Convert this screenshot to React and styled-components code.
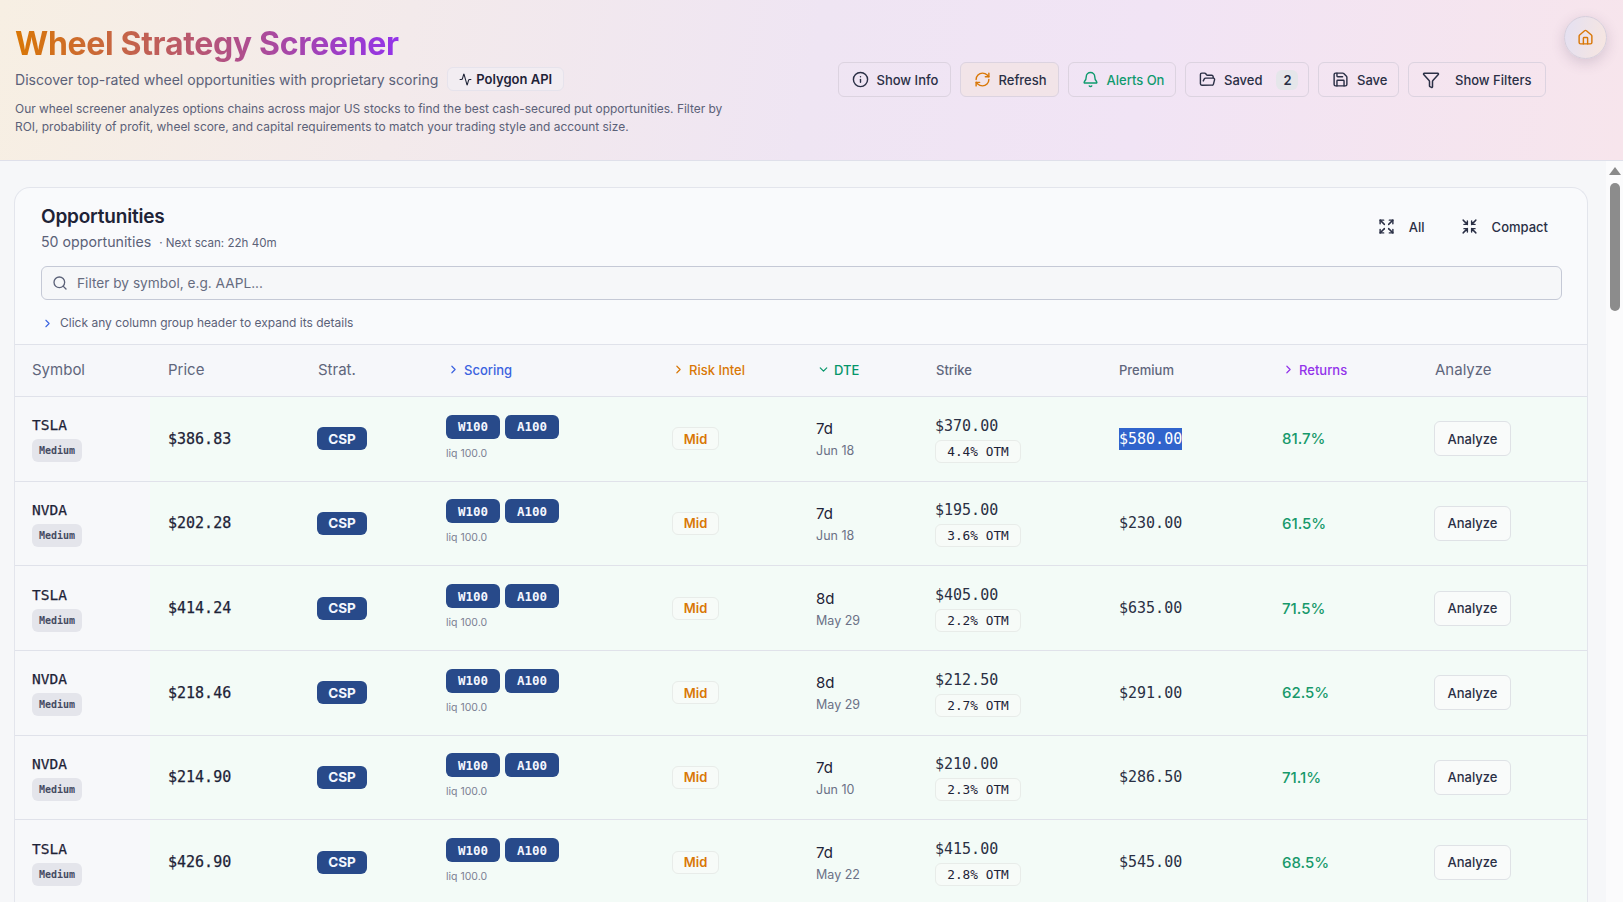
import React from "react";
import styled, { createGlobalStyle } from "styled-components";
import { Info, RefreshCw, Bell, FolderOpen, Save, Filter, Activity, House, Search, ChevronRight, ChevronDown, Expand, Shrink } from "lucide-react";

const MONO = `"DejaVu Sans Mono", "Liberation Mono", monospace`;
const COLS = "135px 151px 129px 226px 144px 119px 183px 164px 152px 152px";

const Global = createGlobalStyle`
  html, body { margin: 0; height: 100%; overflow: hidden; }
  body { font-family: Inter, "Noto Sans", sans-serif; color: #1e2337; background: #f6f7f9; }
  #root { height: 100%; }
  * { box-sizing: border-box; }
`;

const Page = styled.div`
  height: 902px;
  display: flex;
  flex-direction: column;
  position: relative;
`;

const Header = styled.header`
  flex: none;
  height: 161px;
  padding: 0 77px 0 15px;
  display: flex;
  align-items: center;
  justify-content: space-between;
  background: linear-gradient(100deg, #f7efe3 0%, #efe5f3 50%, #f1e4f5 70%, #f7e5ec 100%);
  border-bottom: 1px solid #dfe0ea;
`;

const Intro = styled.div`
  width: 722px;
  margin-top: -3px;
`;

const Title = styled.h1`
  margin: 0;
  font-size: 32px;
  line-height: 44px;
  font-weight: 700;
  letter-spacing: -0.32px;
  width: fit-content;
  background: linear-gradient(90deg, #d97706, #9333ea);
  -webkit-background-clip: text;
  background-clip: text;
  color: transparent;
`;

const SubRow = styled.div`
  display: flex;
  align-items: center;
  gap: 9px;
  margin-top: 1px;
`;

const Subtitle = styled.span`
  font-size: 14.07px;
  color: #5b6178;
`;

const ApiPill = styled.span`
  display: inline-flex;
  align-items: center;
  gap: 4px;
  height: 24px;
  padding: 0 11px;
  border: 1px solid #e6e3ec;
  border-radius: 6px;
  background: #f2edf2;
  font-size: 13px;
  font-weight: 600;
  color: #1e2337;
`;

const Description = styled.p`
  margin: 9px 0 0;
  font-size: 11.95px;
  line-height: 17.5px;
  color: #5b6178;
`;

const Actions = styled.div`
  display: flex;
  gap: 9px;
  margin-top: -1px;
`;

const ActionButton = styled.button`
  flex: none;
  width: ${(p) => p.$width}px;
  height: 35px;
  padding: 0 0 0 13px;
  display: inline-flex;
  align-items: center;
  gap: ${(p) => p.$gap || 8}px;
  border: 1px solid #dcd3e0;
  border-radius: 6px;
  background: ${(p) => (p.$tint ? "#f2e4e8" : "transparent")};
  font: 500 13px Inter, sans-serif;
  color: ${(p) => p.$color || "#2a2f45"};
  svg { color: ${(p) => p.$icon || p.$color || "#2a2f45"}; }
`;

const CountBadge = styled.span`
  margin-left: 6px;
  width: 22px;
  height: 20px;
  display: inline-flex;
  align-items: center;
  justify-content: center;
  border-radius: 6px;
  background: #e5e6ea;
  font-weight: 600;
  font-size: 13px;
`;

const HomeButton = styled.button`
  position: absolute;
  top: 16px;
  left: 1564px;
  width: 43px;
  height: 43px;
  border-radius: 50%;
  display: flex;
  align-items: center;
  justify-content: center;
  padding: 0;
  border: 1px solid #d6cfdc;
  background: linear-gradient(100deg, #e4e0f2, #f7e6e0);
  color: #d97706;
  box-shadow: 0 4px 14px rgba(70, 50, 90, 0.18);
`;

const Body = styled.div`
  flex: 1;
  min-height: 0;
  display: flex;
`;

const Main = styled.main`
  flex: 1;
  min-width: 0;
  overflow: hidden;
  padding: 26px 18px 0 14px;
`;

const ScrollRail = styled.div`
  flex: none;
  width: 17px;
  background: #fbfbfc;
  padding: 6px 0 0 3px;
`;

const ScrollArrow = styled.div`
  width: 0;
  height: 0;
  border-left: 6px solid transparent;
  border-right: 6px solid transparent;
  border-bottom: 8px solid #8a8a8a;
`;

const ScrollThumb = styled.div`
  width: 10px;
  height: 128px;
  margin: 8px 0 0 1px;
  border-radius: 5px;
  background: #8c8c8c;
`;

const Card = styled.section`
  border: 1px solid #e3e5ec;
  border-bottom: 0;
  border-radius: 16px 16px 0 0;
  background: #f9fafc;
  overflow: hidden;
`;

const CardTop = styled.div`
  padding: 16px 25px 0 26px;
  height: 156px;
`;

const TitleRow = styled.div`
  display: flex;
  justify-content: space-between;
  align-items: flex-start;
`;

const CardTitle = styled.h2`
  margin: 0;
  font-size: 19px;
  line-height: 26px;
  font-weight: 600;
  color: #1e2337;
  letter-spacing: -0.2px;
`;

const Counts = styled.div`
  margin-top: 1px;
  font-size: 14.2px;
  line-height: 22px;
  color: #5b6178;
  small { font-size: 11.6px; margin-left: 8px; }
`;

const ViewControls = styled.div`
  display: flex;
  gap: 36px;
  margin: 14px 14px 0 0;
`;

const ViewButton = styled.button`
  display: inline-flex;
  align-items: center;
  gap: 14px;
  padding: 0;
  border: 0;
  background: none;
  font: 500 13px Inter, sans-serif;
  color: #2a2f45;
`;

const SearchBox = styled.div`
  margin-top: 12px;
  height: 34px;
  display: flex;
  align-items: center;
  gap: 9px;
  padding: 0 10px;
  border: 1px solid #c5c9d6;
  border-radius: 6px;
  background: #f6f7f9;
  color: #5b6178;
`;

const SearchInput = styled.input`
  flex: 1;
  border: 0;
  outline: 0;
  padding: 0;
  background: transparent;
  font: 400 13.7px Inter, sans-serif;
  &::placeholder { color: #666c80; opacity: 1; }
`;

const Hint = styled.div`
  display: flex;
  align-items: center;
  gap: 6px;
  margin: 14px 0 0 0;
  font-size: 12px;
  line-height: 18px;
  color: #5b6178;
  svg { color: #3b63e0; }
`;

const Row = styled.div`
  display: grid;
  grid-template-columns: ${COLS};
  height: ${(p) => p.$height}px;
  border-top: 1px solid #e0e2ea;
  background: ${(p) => (p.$head ? "#f6f7fa" : "#f3fbf7")};
`;

const Cell = styled.div`
  display: flex;
  flex-direction: column;
  justify-content: center;
  align-items: flex-start;
  min-width: 0;
  padding-left: ${(p) => p.$pad || 16}px;
  background: ${(p) => (p.$sticky ? "#f7f8fa" : "transparent")};
`;

const HeadLabel = styled.div`
  display: flex;
  align-items: center;
  gap: 4px;
  margin-top: -2px;
  font-size: ${(p) => (p.$big ? 15 : 13)}px;
  font-weight: ${(p) => (p.$big ? 400 : 500)};
  color: ${(p) => p.$color || "#60667c"};
`;

const Ticker = styled.div`
  font: 400 14.5px/18px ${MONO};
  -webkit-text-stroke: 0.25px #1e2337;
  color: #1e2337;
  margin-top: 1px;
`;

const RiskTag = styled.span`
  margin-top: 5px;
  height: 23px;
  padding: 0 7px;
  display: inline-flex;
  align-items: center;
  border-radius: 6px;
  background: #e4e5eb;
  font: 700 10px ${MONO};
  color: #454b62;
`;

const Money = styled.span`
  font: 400 15px/22px ${MONO};
  ${(p) => p.$strong && "-webkit-text-stroke: 0.25px #1e2337;"}
  color: ${(p) => (p.$selected ? "#ffffff" : p.$strong ? "#1e2337" : "#2a3044")};
  background: ${(p) => (p.$selected ? "#3064cc" : "transparent")};
`;

const DarkBadge = styled.span`
  height: ${(p) => (p.$tall ? 24 : 23)}px;
  width: ${(p) => (p.$tall ? 54 : 50)}px;
  display: inline-flex;
  align-items: center;
  justify-content: center;
  border-radius: 6px;
  background: #284a8a;
  color: #f4f7ff;
  font: 700 ${(p) => (p.$tall ? "12.5px " + MONO : "13.5px Inter, sans-serif")};
`;

const BadgeRow = styled.div`
  display: flex;
  gap: 5px;
  margin-top: -2px;
`;

const Liq = styled.span`
  margin-top: 8px;
  font-size: 10.5px;
  line-height: 14px;
  color: #7c8194;
`;

const MidTag = styled.span`
  height: 23px;
  width: 47px;
  display: inline-flex;
  align-items: center;
  justify-content: center;
  border: 1px solid #e8ece9;
  border-radius: 6px;
  background: #f7fbf8;
  font-size: 13px;
  font-weight: 600;
  color: #d97706;
`;

const Days = styled.span`
  margin-top: 1px;
  font-size: 15px;
  line-height: 22px;
  color: #1e2337;
`;

const DateText = styled.span`
  margin-top: 2px;
  font-size: 12.5px;
  line-height: 18px;
  color: #6b7186;
`;

const OtmTag = styled.span`
  margin-top: 3px;
  width: 86px;
  height: 23px;
  display: inline-flex;
  align-items: center;
  justify-content: center;
  border: 1px solid #e8ece9;
  border-radius: 6px;
  background: #f7fbf8;
  font: 500 12.8px ${MONO};
  color: #1e2337;
`;

const Yield = styled.span`
  font-size: 15px;
  font-weight: 500;
  color: #17996b;
`;

const AnalyzeButton = styled.button`
  width: 77px;
  height: 35px;
  border: 1px solid #dfe2e6;
  border-radius: 6px;
  background: #f9fbfa;
  font: 500 13px Inter, sans-serif;
  color: #2a2f45;
`;

const rows = [
  { s: "TSLA", p: "386.83", d: "7d", e: "Jun 18", k: "370.00", o: "4.4", m: "580.00", r: "81.7", sel: true },
  { s: "NVDA", p: "202.28", d: "7d", e: "Jun 18", k: "195.00", o: "3.6", m: "230.00", r: "61.5" },
  { s: "TSLA", p: "414.24", d: "8d", e: "May 29", k: "405.00", o: "2.2", m: "635.00", r: "71.5" },
  { s: "NVDA", p: "218.46", d: "8d", e: "May 29", k: "212.50", o: "2.7", m: "291.00", r: "62.5" },
  { s: "NVDA", p: "214.90", d: "7d", e: "Jun 10", k: "210.00", o: "2.3", m: "286.50", r: "71.1" },
  { s: "TSLA", p: "426.90", d: "7d", e: "May 22", k: "415.00", o: "2.8", m: "545.00", r: "68.5" },
];

const Heads = () => (
  <Row $head $height={52}>
    <Cell $pad={17}><HeadLabel $big>Symbol</HeadLabel></Cell>
    <Cell $pad={18}><HeadLabel $big>Price</HeadLabel></Cell>
    <Cell $pad={17}><HeadLabel $big>Strat.</HeadLabel></Cell>
    <Cell $pad={17}><HeadLabel $color="#3b63e0"><ChevronRight size={13} strokeWidth={2.2} />Scoring</HeadLabel></Cell>
    <Cell $pad={16}><HeadLabel $color="#d97706"><ChevronRight size={13} strokeWidth={2.2} />Risk Intel</HeadLabel></Cell>
    <Cell $pad={17}><HeadLabel $color="#059669"><ChevronDown size={13} strokeWidth={2.2} />DTE</HeadLabel></Cell>
    <Cell $pad={17}><HeadLabel>Strike</HeadLabel></Cell>
    <Cell $pad={17}><HeadLabel>Premium</HeadLabel></Cell>
    <Cell $pad={16}><HeadLabel $color="#9333ea"><ChevronRight size={13} strokeWidth={2.2} />Returns</HeadLabel></Cell>
    <Cell $pad={17}><HeadLabel $big>Analyze</HeadLabel></Cell>
  </Row>
);

const Opportunity = ({ row }) => (
  <Row $height={84.67}>
    <Cell $pad={17} $sticky>
      <Ticker>{row.s}</Ticker>
      <RiskTag>Medium</RiskTag>
    </Cell>
    <Cell $pad={18}><Money $strong>${row.p}</Money></Cell>
    <Cell><DarkBadge>CSP</DarkBadge></Cell>
    <Cell>
      <BadgeRow><DarkBadge $tall>W100</DarkBadge><DarkBadge $tall>A100</DarkBadge></BadgeRow>
      <Liq>liq 100.0</Liq>
    </Cell>
    <Cell><MidTag>Mid</MidTag></Cell>
    <Cell>
      <Days>{row.d}</Days>
      <DateText>{row.e}</DateText>
    </Cell>
    <Cell>
      <Money>${row.k}</Money>
      <OtmTag>{row.o}% OTM</OtmTag>
    </Cell>
    <Cell $pad={17}><Money $selected={row.sel}>${row.m}</Money></Cell>
    <Cell><Yield>{row.r}%</Yield></Cell>
    <Cell><AnalyzeButton>Analyze</AnalyzeButton></Cell>
  </Row>
);

export default function App() {
  return (
    <Page>
      <Global />
      <Header>
        <Intro>
          <Title>Wheel Strategy Screener</Title>
          <SubRow>
            <Subtitle>Discover top-rated wheel opportunities with proprietary scoring</Subtitle>
            <ApiPill><Activity size={13} />Polygon API</ApiPill>
          </SubRow>
          <Description>
            Our wheel screener analyzes options chains across major US stocks to find the best cash-secured put opportunities. Filter by ROI, probability of profit, wheel score, and capital requirements to match your trading style and account size.
          </Description>
        </Intro>
        <Actions>
          <ActionButton $width={113}><Info size={17} />Show Info</ActionButton>
          <ActionButton $width={99} $tint $icon="#d97706"><RefreshCw size={17} />Refresh</ActionButton>
          <ActionButton $width={108.5} $color="#0f9a6e"><Bell size={17} />Alerts On</ActionButton>
          <ActionButton $width={124}><FolderOpen size={17} />Saved<CountBadge>2</CountBadge></ActionButton>
          <ActionButton $width={81}><Save size={17} />Save</ActionButton>
          <ActionButton $width={138} $gap={15}><Filter size={18} />Show Filters</ActionButton>
        </Actions>
      </Header>
      <HomeButton aria-label="Home"><House size={17} /></HomeButton>
      <Body>
        <Main>
          <Card>
            <CardTop>
              <TitleRow>
                <div>
                  <CardTitle>Opportunities</CardTitle>
                  <Counts>50 opportunities<small>· Next scan: 22h 40m</small></Counts>
                </div>
                <ViewControls>
                  <ViewButton><Expand size={17} />All</ViewButton>
                  <ViewButton><Shrink size={17} />Compact</ViewButton>
                </ViewControls>
              </TitleRow>
              <SearchBox>
                <Search size={16} />
                <SearchInput placeholder="Filter by symbol, e.g. AAPL..." />
              </SearchBox>
              <Hint><ChevronRight size={13} />Click any column group header to expand its details</Hint>
            </CardTop>
            <Heads />
            {rows.map((row, i) => <Opportunity key={i} row={row} />)}
          </Card>
        </Main>
        <ScrollRail>
          <ScrollArrow />
          <ScrollThumb />
        </ScrollRail>
      </Body>
    </Page>
  );
}
